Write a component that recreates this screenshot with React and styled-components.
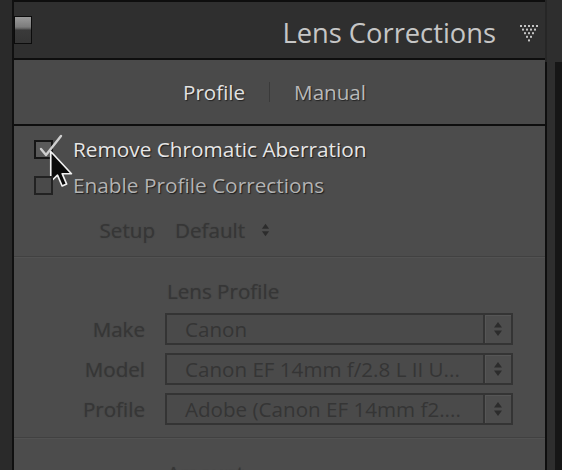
import React from 'react'
import styled, { createGlobalStyle } from 'styled-components'

const GlobalStyle = createGlobalStyle`
  html, body {
    margin: 0;
    padding: 0;
    background: #2b2b2b;
  }
  body {
    font-family: "Open Sans", "Noto Sans", sans-serif;
  }
`

function App() {
  return (
    <>
      <GlobalStyle />
      <Page>
        <Gutter />
        <Column>
          <PrevEdge />
          <Header>
            <Toggle />
            <Title>Lens Corrections</Title>
            <CollapseIcon />
          </Header>
          <Tabs>
            <Tab $active>Profile</Tab>
            <TabSep />
            <Tab>Manual</Tab>
          </Tabs>
          <Content>
            <Section $pad="5px 0 8px">
              <CheckRow>
                <Box $checked>
                  <CheckMark />
                  <Cursor />
                </Box>
                <CheckLabel $on>Remove Chromatic Aberration</CheckLabel>
              </CheckRow>
              <CheckRow>
                <Box />
                <CheckLabel>Enable Profile Corrections</CheckLabel>
              </CheckRow>
              <SetupRow>
                <Dim $right>Setup</Dim>
                <SetupValue>
                  <Dim>Default</Dim>
                  <Stepper $small />
                </SetupValue>
              </SetupRow>
            </Section>
            <Divider />
            <Section $pad="15px 0 12px">
              <Heading>Lens Profile</Heading>
              <SelectGrid>
                {[
                  ['Make', 'Canon'],
                  ['Model', 'Canon EF 14mm f/2.8 L II U...'],
                  ['Profile', 'Adobe (Canon EF 14mm f2....'],
                ].map(([label, value]) => (
                  <React.Fragment key={label}>
                    <Dim $right>{label}</Dim>
                    <Select>
                      <SelectValue>{value}</SelectValue>
                      <SelectArrow>
                        <Stepper />
                      </SelectArrow>
                    </Select>
                  </React.Fragment>
                ))}
              </SelectGrid>
            </Section>
            <Divider />
            <Section $pad="16px 0 0">
              <Heading>Amount</Heading>
            </Section>
          </Content>
        </Column>
        <RightGutter>
          <RightTop />
          <RightBody />
        </RightGutter>
      </Page>
    </>
  )
}

function CollapseIcon() {
  const rows = [5, 4, 3, 2, 1]
  return (
    <TriangleSvg width="18" height="17" viewBox="0 0 18 17">
      {rows.map((count, r) =>
        Array.from({ length: count }).map((_, i) => (
          <rect
            key={r + '-' + i}
            x={r * 2 + i * 4}
            y={r * 3.6}
            width="2"
            height="2"
            fill="#c4c4c4"
          />
        ))
      )}
    </TriangleSvg>
  )
}

function CheckMark() {
  return (
    <CheckSvg width="30" height="24" viewBox="0 0 30 24">
      <path d="M5 13 L10 19 L25 0" fill="none" stroke="#cfcfcf" strokeWidth="2.4" strokeLinecap="round" strokeLinejoin="round" />
    </CheckSvg>
  )
}

function Cursor() {
  return (
    <CursorSvg width="26" height="39" viewBox="0 0 17 26">
      <path d="M1 1 L1 21 L5.5 16.8 L8.6 24 L11.6 22.7 L8.6 15.8 L14.8 15.8 Z" fill="#0a0a0a" stroke="#f2f2f2" strokeWidth="1.1" strokeLinejoin="round" />
    </CursorSvg>
  )
}

function Stepper({ $small }) {
  return (
    <StepperSvg $small={$small} width="10" height="16" viewBox="0 0 10 16">
      <path d="M5 1 L9 6.5 L1 6.5 Z" fill="#2c2c2c" />
      <path d="M1 9.5 L9 9.5 L5 15 Z" fill="#2c2c2c" />
    </StepperSvg>
  )
}

export default App

const Page = styled.div`
  width: 562px;
  height: 470px;
  overflow: hidden;
  display: flex;
  background: #2b2b2b;
`
const Gutter = styled.div`
  width: 12px;
  flex: none;
  background: #2a2a2a;
`
const Column = styled.div`
  width: 531px;
  flex: none;
  display: flex;
  flex-direction: column;
  border-left: 2px solid #101010;
`
const PrevEdge = styled.div`
  height: 2px;
  background: #3b3b3b;
  border-bottom: 2px solid #0e0e0e;
`
const Header = styled.div`
  height: 56px;
  flex: none;
  display: flex;
  align-items: center;
  background: #2f2f2f;
  border-bottom: 2px solid #0e0e0e;
  padding-right: 7px;
`
const Toggle = styled.div`
  width: 16px;
  height: 26px;
  border: 1px solid #0c0c0c;
  background: linear-gradient(#9a9a9a 0%, #7c7c7c 38%, #5a5a5a 46%, #3a3a3a 50%, #353535 100%);
`
const Title = styled.div`
  margin-left: auto;
  margin-top: 5px;
  font-size: 27.3px;
  color: #c6c6c6;
`
const TriangleSvg = styled.svg`
  margin-left: 24px;
  margin-top: 6px;
`
const Tabs = styled.div`
  height: 64px;
  flex: none;
  display: flex;
  align-items: center;
  justify-content: center;
  gap: 24px;
  padding-right: 10px;
  background: #4a4a4a;
  border-bottom: 2px solid #0e0e0e;
`
const Tab = styled.span`
  font-size: 20.6px;
  color: ${p => (p.$active ? '#e2e2e2' : '#b9b9b9')};
  text-shadow: 1px 1px 1px #222;
`
const TabSep = styled.span`
  width: 1px;
  height: 20px;
  background: #3a3a3a;
`
const Content = styled.div`
  flex: 1;
  background: #4c4c4c;
`
const Section = styled.div`
  padding: ${p => p.$pad};
`
const Divider = styled.div`
  height: 1px;
  background: #414141;
  border-bottom: 1px solid #525252;
`
const CheckRow = styled.div`
  height: 36px;
  display: flex;
  align-items: center;
  gap: 20px;
  padding-left: 20px;
`
const Box = styled.div`
  position: relative;
  width: 15px;
  height: 15px;
  border: 2px solid ${p => (p.$checked ? '#161616' : '#222')};
  background: ${p => (p.$checked ? '#5a5a5a' : '#4a4a4a')};
`
const CheckSvg = styled.svg`
  position: absolute;
  left: 0;
  top: -6px;
  overflow: visible;
`
const CursorSvg = styled.svg`
  position: absolute;
  left: 13px;
  top: 8px;
  overflow: visible;
`
const CheckLabel = styled.span`
  font-size: 20.8px;
  color: ${p => (p.$on ? '#e6e6e6' : '#b3b3b3')};
  text-shadow: 1px 1px 1px #1e1e1e;
`
const Dim = styled.span`
  font-size: 20.6px;
  color: #363636;
  text-shadow: 0 0 1px rgba(40, 40, 40, 0.4);
  text-align: ${p => (p.$right ? 'right' : 'left')};
  white-space: nowrap;
`
const SetupRow = styled.div`
  margin-top: 9px;
  height: 36px;
  display: grid;
  grid-template-columns: 141px auto;
  column-gap: 20px;
  align-items: center;
`
const SetupValue = styled.div`
  display: flex;
  align-items: center;
  gap: 16px;
`
const StepperSvg = styled.svg`
  display: block;
  width: ${p => (p.$small ? '9px' : '10px')};
`
const Heading = styled.div`
  height: 36px;
  line-height: 36px;
  padding-left: 153px;
  font-size: 20.6px;
  color: #363636;
  text-shadow: 0 0 1px rgba(40, 40, 40, 0.4);
  margin-bottom: 4px;
`
const SelectGrid = styled.div`
  display: grid;
  grid-template-columns: 131px 348px;
  grid-auto-rows: 32px;
  column-gap: 20px;
  row-gap: 8px;
  align-items: center;
`
const Select = styled.div`
  height: 32px;
  box-sizing: border-box;
  display: flex;
  border: 2px solid #343434;
  background: #4a4a4a;
`
const SelectValue = styled.div`
  flex: 1;
  min-width: 0;
  padding-left: 18px;
  font-size: 20.6px;
  line-height: 28px;
  color: #353535;
  white-space: nowrap;
  overflow: hidden;
`
const SelectArrow = styled.div`
  width: 26px;
  display: flex;
  align-items: center;
  justify-content: center;
  border-left: 2px solid #343434;
  background: #4d4d4d;
  box-shadow: inset 1px 1px 0 #565656;
`
const RightGutter = styled.div`
  flex: 1;
  display: flex;
  flex-direction: column;
`
const RightTop = styled.div`
  height: 62px;
  background: #2e2e2e;
  border-left: 2px solid #262626;
`
const RightBody = styled.div`
  flex: 1;
  background: #2e2e2e;
  border-left: 2px solid #0e0e0e;
  border-right: 7px solid #161616;
`
